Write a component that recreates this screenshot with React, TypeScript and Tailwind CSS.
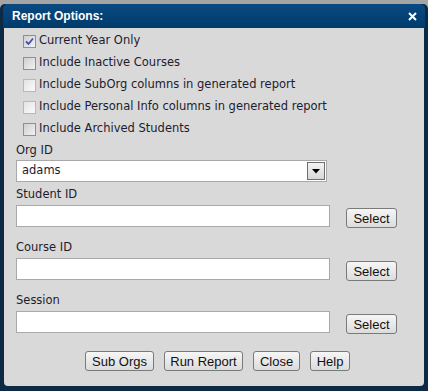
import React from "react";

const tahoma = { fontFamily: '"DejaVu Sans", Verdana, sans-serif' };

const Check = ({ checked, light }: { checked?: boolean; light?: boolean }) => (
  <span
    className={
      "w-[13px] h-[13px] border flex items-center justify-center shrink-0 " +
      (light
        ? "border-[#b8b8b8] bg-gradient-to-br from-[#e4e4e4] to-[#fafafa]"
        : "border-[#8f8f8f] bg-gradient-to-br from-[#cfcfcf] to-[#f2f2f2]")
    }
  >
    {checked && (
      <svg width="9" height="9" viewBox="0 0 9 9">
        <path d="M1 4.5 L3.5 7 L8 1.5" fill="none" stroke="#3b4fb8" strokeWidth="1.8" />
      </svg>
    )}
  </span>
);

const Btn = ({ children, w }: { children: React.ReactNode; w: string }) => (
  <button
    className={
      "h-[20px] border border-[#7a7a7a] rounded-[3px] bg-gradient-to-b from-[#f6f6f6] to-[#dcdcdc] text-[13px] leading-none text-[#111] " +
      w
    }
    style={{ fontFamily: '"Liberation Sans", Arial, sans-serif' }}
  >
    {children}
  </button>
);

export default function App() {
  const options = [
    { label: "Current Year Only", checked: true },
    { label: "Include Inactive Courses" },
    { label: "Include SubOrg columns in generated report", light: true },
    { label: "Include Personal Info columns in generated report", light: true },
    { label: "Include Archived Students" },
  ];

  const fields = ["Student ID", "Course ID", "Session"];

  return (
    <div className="w-[428px] h-[391px] bg-[#a5a5a5] pt-[4px] overflow-hidden">
      <div className="h-[387px] bg-[#0c2a45] rounded-t-[5px] flex flex-col px-[3px] pb-[5px]">
        <div className="h-[24px] rounded-t-[5px] bg-gradient-to-b from-[#0a4a82] to-[#003b6b] flex items-center justify-between pl-[9px] pr-[8px]">
          <span
            className="text-white font-bold text-[12px]"
            style={{ fontFamily: '"Liberation Sans", Arial, sans-serif' }}
          >
            Report Options:
          </span>
          <svg width="9" height="9" viewBox="0 0 9 9">
            <path d="M1 1 L8 8 M8 1 L1 8" stroke="#fff" strokeWidth="2" />
          </svg>
        </div>

        <div
          className="flex-1 bg-[#d9d9d9] rounded-b-[4px] mx-[1px] pl-[12px] pr-[27px] pt-[2px] text-[#1c1c2e] text-[11.5px]"
          style={tahoma}
        >
          <div className="flex flex-col pl-[7px]">
            {options.map((o) => (
              <label key={o.label} className="h-[22px] flex items-center gap-[3px]">
                <Check checked={o.checked} light={o.light} />
                <span>{o.label}</span>
              </label>
            ))}
          </div>

          <div className="h-[19px] flex items-center mt-[1px]">Org ID</div>
          <div className="w-[311px] h-[22px] bg-white border border-[#a9a9a9] flex items-center justify-between pl-[5px] pr-[1px]">
            <span>adams</span>
            <span className="w-[18px] h-[18px] border border-[#6e6e6e] bg-gradient-to-b from-[#f4f4f4] to-[#d8d8d8] flex items-center justify-center">
              <svg width="8" height="5" viewBox="0 0 8 5">
                <path d="M0 0 H8 L4 4.5 Z" fill="#000" />
              </svg>
            </span>
          </div>

          {fields.map((f, i) => (
            <div key={f} className={i === 0 ? "mt-[3px]" : "mt-[10px]"}>
              <div className="h-[20px] flex items-center">{f}</div>
              <div className="flex items-start gap-[16px]">
                <div className="w-[315px] h-[22px] bg-white border border-[#a9a9a9]" />
                <div className="mt-[3px]">
                  <Btn w="w-[51px]">Select</Btn>
                </div>
              </div>
            </div>
          ))}

          <div className="flex justify-center gap-[10px] mt-[17px] pl-[22px]">
            <Btn w="w-[69px]">Sub Orgs</Btn>
            <Btn w="w-[79px]">Run Report</Btn>
            <Btn w="w-[47px]">Close</Btn>
            <Btn w="w-[40px]">Help</Btn>
          </div>
        </div>
      </div>
    </div>
  );
}
